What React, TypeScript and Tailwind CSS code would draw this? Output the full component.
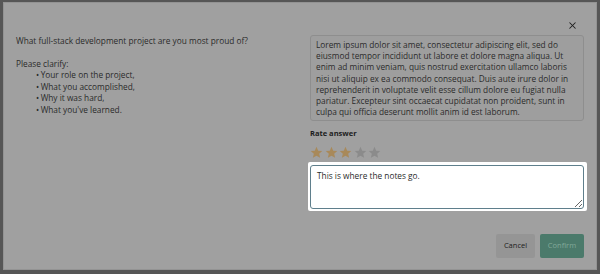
import { X } from "lucide-react";

const points = [
  "Your role on the project,",
  "What you accomplished,",
  "Why it was hard,",
  "What you've learned.",
];

const answer =
  "Lorem ipsum dolor sit amet, consectetur adipiscing elit, sed do eiusmod tempor incididunt ut labore et dolore magna aliqua. Ut enim ad minim veniam, quis nostrud exercitation ullamco laboris nisi ut aliquip ex ea commodo consequat. Duis aute irure dolor in reprehenderit in voluptate velit esse cillum dolore eu fugiat nulla pariatur. Excepteur sint occaecat cupidatat non proident, sunt in culpa qui officia deserunt mollit anim id est laborum.";

function Star({ on }: { on: boolean }) {
  return (
    <svg width="13" height="13" viewBox="0 0 24 24">
      <path
        d="M12 1.5l3.1 7.1 7.6.7-5.8 5 1.8 7.5L12 17.8l-6.7 4 1.8-7.5-5.8-5 7.6-.7z"
        fill={on ? "#a8895a" : "#8b8b8b"}
      />
    </svg>
  );
}

export default function App() {
  return (
    <div
      className="w-[600px] h-[274px] bg-[#565656] pt-[2px] pl-[3px] text-[#2b2b2b]"
      style={{ fontFamily: "'Open Sans', sans-serif" }}
    >
      <div className="relative w-[594px] h-[268px] bg-[#a0a0a0] border border-[#939393] flex flex-col px-[12px] pt-[32px] pb-[11px]">
        {/* Close */}
        <button className="absolute right-[18px] top-[17px] text-[#1e1e1e]">
          <X size={11} strokeWidth={2.2} />
        </button>

        <div className="flex justify-between flex-1">
          {/* Question */}
          <div className="text-[8.3px] leading-[11.6px]">
            <p>What full-stack development project are you most proud of?</p>
            <p className="mt-[11px]">Please clarify:</p>
            <ul className="pl-[20px]">
              {points.map((p) => (
                <li key={p} className="flex gap-[1.5px]">
                  <span>•</span>
                  <span>{p}</span>
                </li>
              ))}
            </ul>
          </div>

          {/* Answer + rating */}
          <div className="w-[274px] flex flex-col">
            <div className="border border-[#8e8e8e] bg-[#9e9e9e] rounded-[3px] pl-[5px] pr-[3px] pt-[3px] pb-[3px] text-[8.3px] leading-[11.2px]">
              {answer}
            </div>
            <p className="mt-[7px] text-[7.5px] leading-[10px] font-bold text-[#1c1c1c]">
              Rate answer
            </p>
            <div className="flex gap-[1.5px] mt-[8px]">
              {[1, 2, 3, 4, 5].map((n) => (
                <Star key={n} on={n <= 3} />
              ))}
            </div>
            <div className="mt-[3px] -mx-[2.5px] p-[2.5px] bg-white rounded-[2px]">
              <textarea
                spellCheck={false}
                defaultValue="This is where the notes go."
                className="block w-full h-[44px] border-[1.5px] border-[#5f7f8c] rounded-[3px] px-[6px] pt-[5px] text-[8.3px] leading-[10px] text-[#2b2b2b] outline-none"
                style={{ fontFamily: "'Open Sans', sans-serif" }}
              />
            </div>
          </div>
        </div>

        {/* Actions */}
        <div className="flex justify-end gap-[5px]">
          <button className="w-[39px] h-[24px] rounded-[2px] bg-[#959595] text-[7.5px] text-[#1e1e1e]">
            Cancel
          </button>
          <button className="w-[44px] h-[24px] rounded-[2px] bg-[#4b7a6b] text-[7.5px] text-[#82a999]">
            Confirm
          </button>
        </div>
      </div>
    </div>
  );
}
